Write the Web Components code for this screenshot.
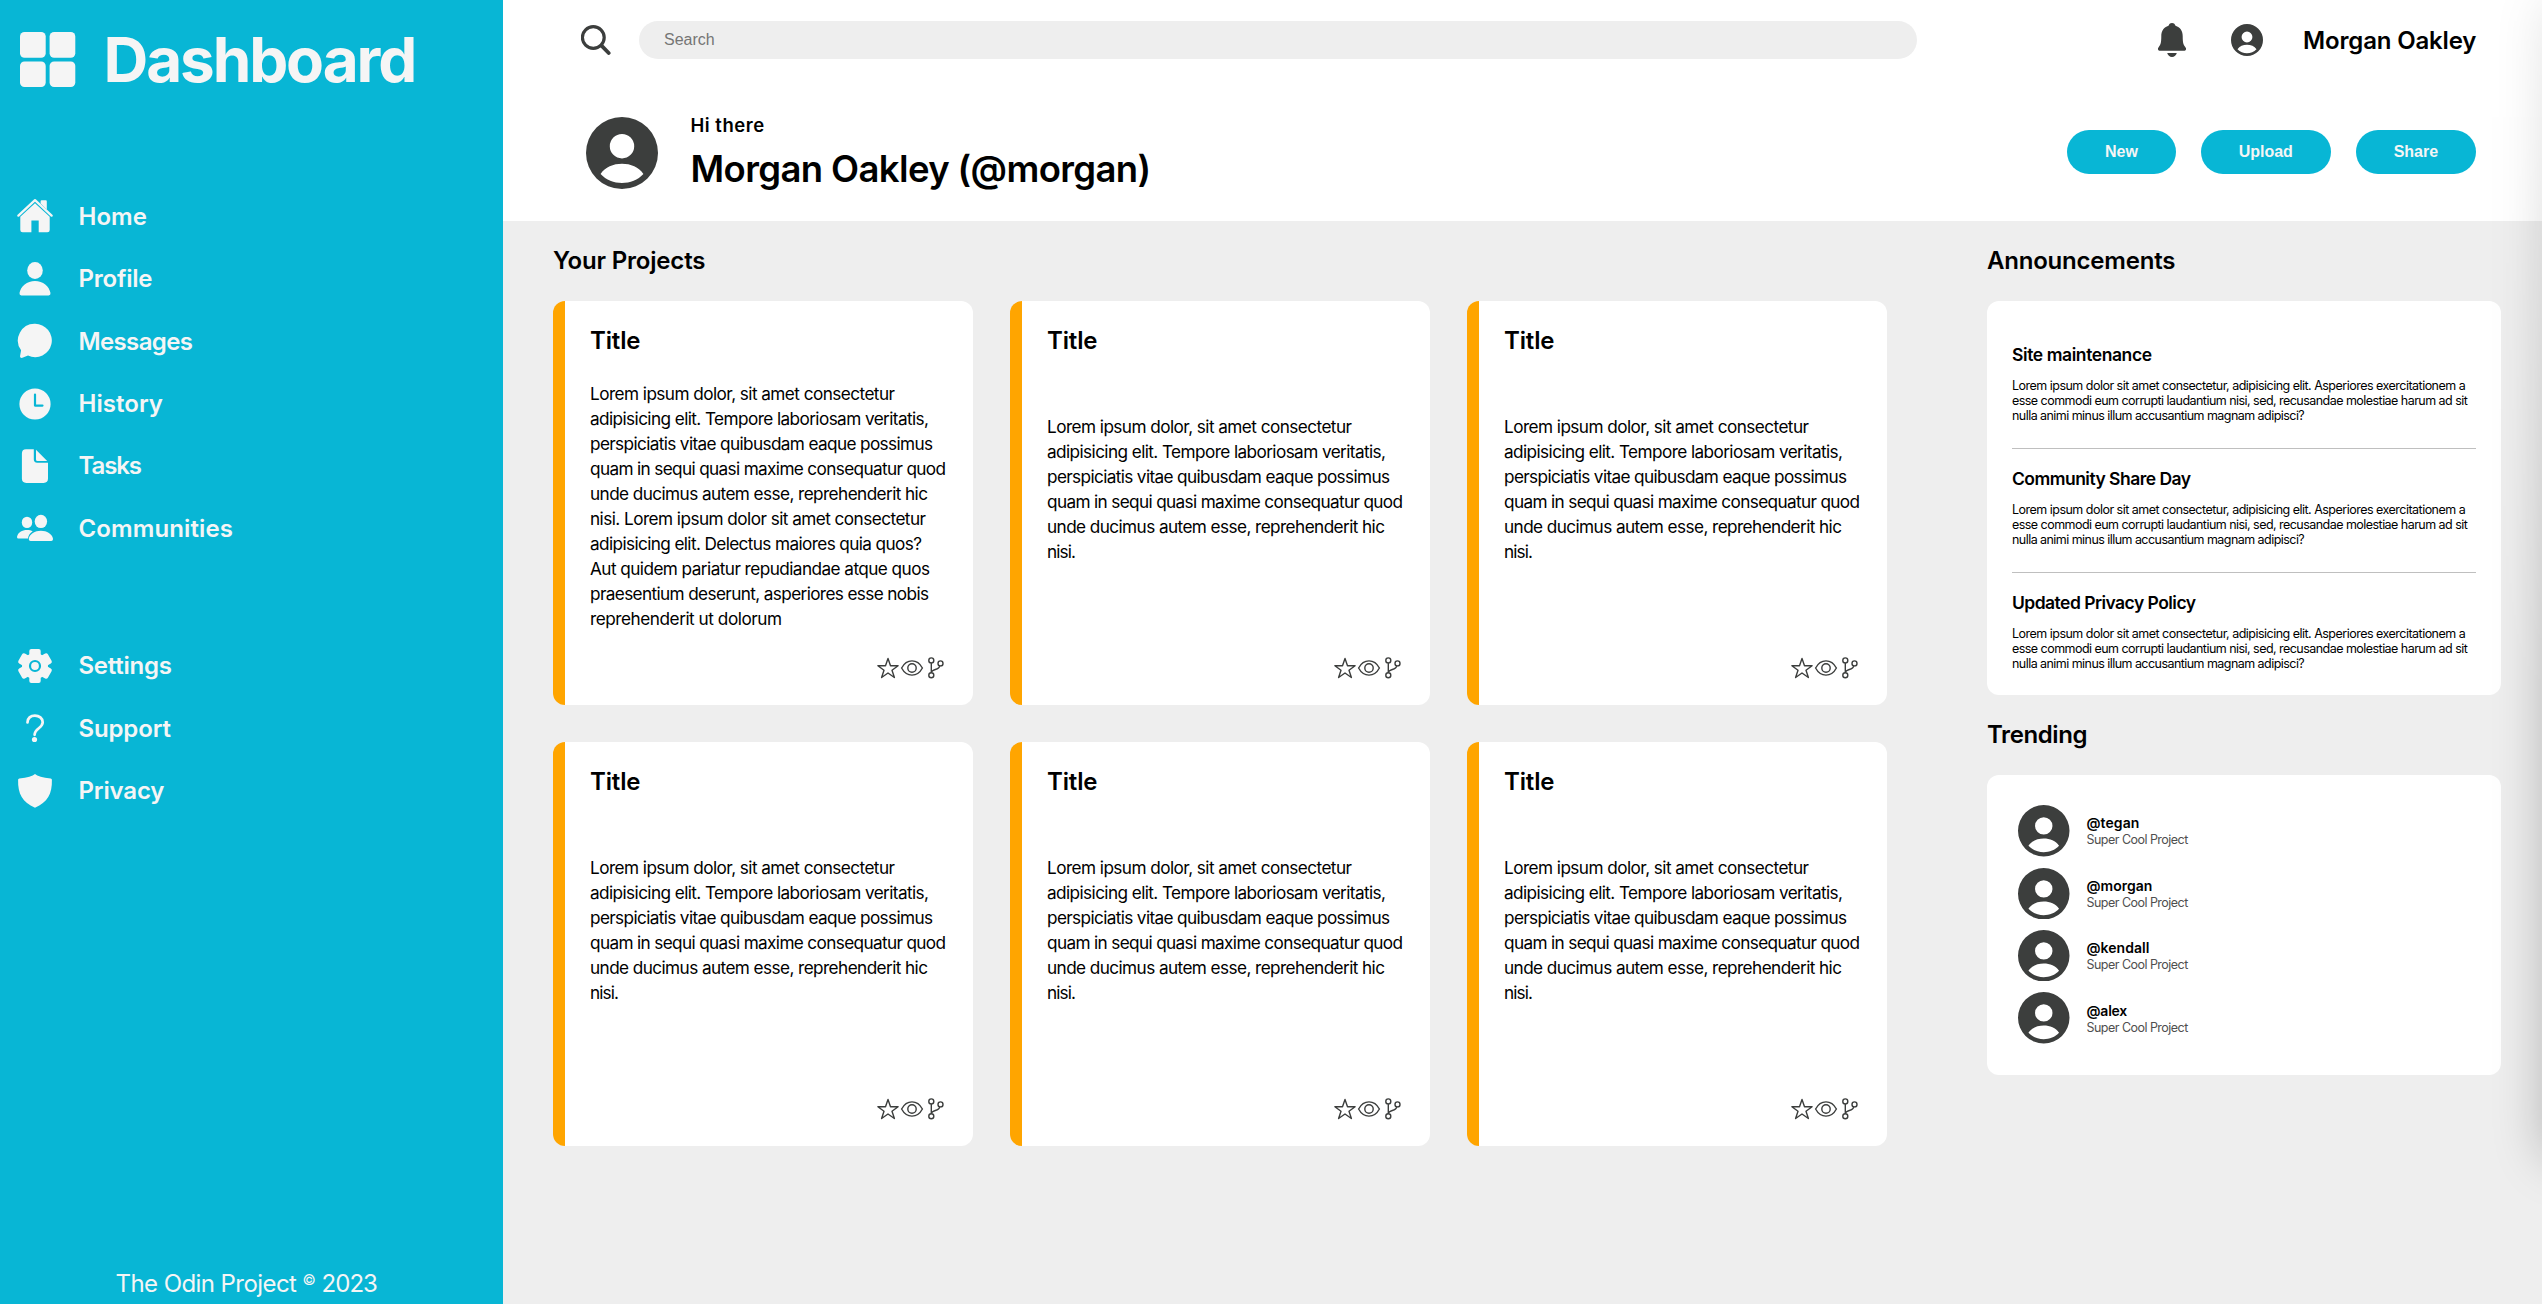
<!DOCTYPE html>
<html lang="en">
<head>
<meta charset="utf-8">
<title>Dashboard</title>
<style>
html,body{margin:0;padding:0;height:100%;overflow:hidden}
body{font-family:Inter,Lato,"Liberation Sans",sans-serif;color:#000;background:#eee}
</style>
</head>
<body>
<dash-app></dash-app>
<script>
const define = (name, css, html, ready) => customElements.define(name, class extends HTMLElement {
  connectedCallback() {
    if (this.shadowRoot) return;
    const root = this.attachShadow({mode: 'open'});
    root.innerHTML = `<style>:host{display:block;box-sizing:border-box}${css}</style>` + (typeof html === 'function' ? html(this) : html);
    if (ready) ready(this, root);
  }
});

const ICONS = {
  logo: ['0 0 56 56', '<g fill="currentColor"><rect x="0" y="0" width="25.7" height="25.7" rx="4.5"/><rect x="29.6" y="0" width="25.7" height="25.7" rx="4.5"/><rect x="0" y="29.4" width="25.7" height="25.7" rx="4.5"/><rect x="29.6" y="29.4" width="25.7" height="25.7" rx="4.5"/></g>'],
  home: ['0 0 36 36', '<path d="M1.4 17.6 18 2.2 34.6 17.6" fill="none" stroke="currentColor" stroke-width="2.3" stroke-linecap="round" stroke-linejoin="round"/><path fill="currentColor" d="M23.6 5.4V3.2q0-1 1-1h4.2q1 0 1 1v8.2zM18 5.2 32.7 18.8V32q0 2.3-2.3 2.3h-8.7V22.4h-7.3v11.9H5.6q-2.3 0-2.3-2.3V18.8z"/>'],
  profile: ['0 0 36 36', '<g fill="currentColor"><ellipse cx="18" cy="9.6" rx="7.8" ry="8.5"/><path d="M4.3 34.4q-2 0-1.8-2.3C3.7 25.3 10 20 18 20s14.300 5.300 15.500 12.100q.2 2.300-1.800 2.300z"/></g>'],
  messages: ['0 0 36 36', '<path fill="currentColor" d="M18 .8a16.700 16.700 0 1 1-7 31.800l-5.600 2.200c-1.500.5-2.600-.5-2.300-2l1-5.500A16.700 16.700 0 0 1 18 .8z"/>'],
  history: ['0 0 36 36', '<circle cx="18" cy="18" r="15.600" fill="currentColor"/><path d="M18 8.600v11h7.500" fill="none" stroke="#08b6d5" stroke-width="2.200" stroke-linecap="round" stroke-linejoin="round"/>'],
  tasks: ['0 0 36 36', '<path fill="currentColor" d="M9 1.300h7.800v10q0 3.400 3.400 3.400H31v15.800q0 4.400-4.400 4.400H9.300q-4.400 0-4.400-4.400V5.700q0-4.400 4.100-4.400zM19 1.800 30.200 12.900h-9.700q-1.500 0-1.500-1.500z"/>'],
  communities: ['0 0 36 36', '<g fill="currentColor"><ellipse cx="10" cy="12.400" rx="5.200" ry="5.700"/><ellipse cx="23.900" cy="11.400" rx="6.200" ry="6.700"/><path d="M1.300 28.600q-1.500-.2-1.200-2C1 22.500 5 20 10 20c2.200 0 4.200.4 5.700 1.200-2.500 1.700-4.400 4-4.700 7.400zM13.600 31q-2-.1-1.800-2.200c.7-4.800 6.200-8.100 12.100-8.100S35.400 24 36 28.800q.1 2.100-1.700 2.200z"/></g>'],
  settings: ['0 0 36 36', '<g fill="currentColor"><circle cx="18" cy="18" r="13"/><rect x="12.300" y="1" width="11.400" height="34" rx="2"/><rect x="12.300" y="1" width="11.400" height="34" rx="2" transform="rotate(60 18 18)"/><rect x="12.300" y="1" width="11.400" height="34" rx="2" transform="rotate(120 18 18)"/></g><circle cx="18" cy="18" r="5" fill="none" stroke="#08b6d5" stroke-width="2.200"/>'],
  support: ['0 0 36 36', '<path d="M10.500 12.500c0-4.500 3.200-6.900 7.400-6.900s7.800 2.600 7.800 6.700c0 5.900-8.100 6-8.100 12.500" fill="none" stroke="currentColor" stroke-width="2.700" stroke-linecap="round"/><circle cx="17.500" cy="29.500" r="2.600" fill="currentColor"/>'],
  privacy: ['0 0 36 36', '<path fill="currentColor" d="M18 .9q3.500 3 15.700 4.500 1.200.2 1.200 1.400C35.300 21 30.500 29.500 18 34.700 5.500 29.500.7 21 1.100 6.800q0-1.200 1.200-1.400Q14.500 3.900 18 .9z"/>'],
  search: ['0 0 30 30', '<circle cx="12.300" cy="12.500" r="10.900" fill="none" stroke="currentColor" stroke-width="3.200"/><path d="m20.500 20.700 7.200 7.300" stroke="currentColor" stroke-width="3.800" stroke-linecap="round"/>'],
  bell: ['0 0 28 34', '<path fill="currentColor" d="M14 0c2 0 3 1.300 3.500 2.800 4.700 1.500 7.200 5.200 7.200 10.200 0 6.800.7 8.800 2.500 10.900 1.800 2.100.6 3.900-1.300 3.900H2.100c-1.900 0-3.100-1.800-1.300-3.900C2.600 21.800 3.300 19.800 3.300 13c0-5 2.500-8.700 7.200-10.200C11 1.300 12 0 14 0zM9.200 30h9.600c-.5 2.400-2.500 3.900-4.800 3.900S9.700 32.400 9.200 30z"/>'],
  user: ['0 0 72 72', '<path fill="currentColor" fill-rule="evenodd" d="M36 0a36 36 0 1 1 0 72a36 36 0 1 1 0-72zM36 17a12.200 12.200 0 1 0 0 24.400a12.200 12.200 0 1 0 0-24.400zM14.600 57C20 63 28 66 36 66S52 63 57.400 57C53 50 44.500 46.800 36 46.800S19 50 14.600 57z"/>'],
  star: ['0 0 24 24', '<path d="m12 2.500 2.500 7.200h7.600l-6.100 4.500 2.400 7.300-6.400-4.500-6.400 4.500L8 14.200 1.900 9.700h7.600z" fill="none" stroke="currentColor" stroke-width="1.400" stroke-linejoin="round"/>'],
  eye: ['0 0 24 24', '<path d="M1.600 12C4 7.500 7.700 4.900 12 4.900S20 7.500 22.400 12C20 16.500 16.300 19.100 12 19.100S4 16.500 1.600 12z" fill="none" stroke="currentColor" stroke-width="1.400"/><circle cx="12" cy="12" r="4.200" fill="none" stroke="currentColor" stroke-width="1.400"/>'],
  fork: ['0 0 24 24', '<g fill="none" stroke="currentColor" stroke-width="1.400"><circle cx="7.300" cy="4.400" r="2.500"/><circle cx="7.300" cy="19.300" r="2.500"/><circle cx="16.500" cy="7.400" r="2.500"/><path d="M7.300 7v9.800M15.800 9.900c-.8 4.600-7.500 2.700-8.500 6.500"/></g>']
};

define('ui-icon', 'svg{display:block;width:100%;height:100%}:host{flex:none}', el => {
  const [box, body] = ICONS[el.getAttribute('name')];
  return `<svg viewBox="${box}" aria-hidden="true">${body}</svg>`;
}, el => {
  el.style.width = el.getAttribute('w') + 'px';
  el.style.height = (el.getAttribute('h') || el.getAttribute('w')) + 'px';
});

/* A single line of text, tracked so that it spans the width given by "w". */
define('text-line', ':host{white-space:nowrap}span{display:inline-block;vertical-align:top}', '<span><slot></slot></span>', (el, root) => {
  const span = root.querySelector('span');
  const size = parseFloat(getComputedStyle(el).fontSize);
  const want = parseFloat(el.getAttribute('w')) + size * 0.06;
  const have = span.getBoundingClientRect().width;
  el.style.letterSpacing = ((want - have) / (el.textContent.length - 1)).toFixed(3) + 'px';
  el.style.width = el.getAttribute('w') + 'px';
});

define('nav-item', ':host{display:flex;align-items:center;gap:25.500px;height:62.45px;font-weight:600;font-size:24px;line-height:30px}ui-icon{width:36px}text-line{padding-top:1px}',
  el => `<ui-icon name="${el.getAttribute('icon')}" w="36"></ui-icon><text-line w="${el.getAttribute('w')}">${el.getAttribute('label')}</text-line>`);

define('dash-sidebar', `:host{display:flex;flex-direction:column;background:#08b6d5;color:#f5f5f5;height:100%;padding-left:17px}
  .brand{display:flex;align-items:center;gap:27.500px;padding-left:3px;height:119px}
  .brand text-line{font-size:62px;font-weight:700;line-height:70px}
  nav{margin-top:66px} nav+nav{margin-top:75px}
  footer{margin-top:auto;display:flex;font-size:24px;line-height:30px;padding:0 0 5px 98.500px;gap:7px}
  .c{font-size:14.500px;line-height:21px;width:12px}`,
  `<div class="brand"><ui-icon name="logo" w="56"></ui-icon><text-line w="310">Dashboard</text-line></div>
  <nav><nav-item icon="home" label="Home" w="67"></nav-item><nav-item icon="profile" label="Profile" w="72.5"></nav-item><nav-item icon="messages" label="Messages" w="113"></nav-item><nav-item icon="history" label="History" w="83"></nav-item><nav-item icon="tasks" label="Tasks" w="62"></nav-item><nav-item icon="communities" label="Communities" w="153"></nav-item></nav>
  <nav><nav-item icon="settings" label="Settings" w="92"></nav-item><nav-item icon="support" label="Support" w="91"></nav-item><nav-item icon="privacy" label="Privacy" w="84.5"></nav-item></nav>
  <footer><text-line w="180">The Odin Project</text-line><span class="c">©</span><text-line w="55">2023</text-line></footer>`);

define('pill-button', ':host{height:44px;border-radius:22px;background:#08b6d5;color:#f5f5f5;font:700 16px/44px "Liberation Sans",Arial,sans-serif;padding:0 37.900px}', '<slot></slot>');

define('dash-header', `:host{height:221px;background:#fff;color:#000}
  .top{display:flex;align-items:center;height:80px;padding:0 67px 0 78px}
  ui-icon{color:#3c3e3d}
  .search{box-sizing:border-box;width:1278px;height:38px;border-radius:19px;background:#eee;margin-left:28px;padding-left:25px;font:16px/38px "Liberation Sans",Arial,sans-serif;color:#757575}
  .me{display:flex;align-items:center;margin-left:auto;font-size:24px;font-weight:600;line-height:30px}
  .me text-line{padding-top:1px}
  .me ui-icon+ui-icon{margin:0 40.500px 0 45px}
  .hello{display:flex;align-items:center;height:72px;padding:37px 66px 0 83px}
  .who{margin-left:32.500px;padding-bottom:3px;font-weight:600}
  .hi{font-size:18.500px;line-height:24px}.name{font-size:36.500px;line-height:44px;margin-top:10px}
  .btns{display:flex;gap:25px;margin-left:auto;margin-top:-2px}`,
  `<div class="top"><ui-icon name="search" w="30"></ui-icon><div class="search">Search</div>
   <div class="me"><ui-icon name="bell" w="28" h="34"></ui-icon><ui-icon name="user" w="32"></ui-icon><text-line w="172">Morgan Oakley</text-line></div></div>
   <div class="hello"><ui-icon name="user" w="72"></ui-icon><div class="who"><text-line class="hi" w="72.5">Hi there</text-line><text-line class="name" w="458.5">Morgan Oakley (@morgan)</text-line></div>
   <div class="btns"><pill-button>New</pill-button><pill-button>Upload</pill-button><pill-button>Share</pill-button></div></div>`);

const lines = list => list.map(([t, w]) => `<text-line w="${w}">${t}</text-line>`).join('');
const INTRO = [['Lorem ipsum dolor, sit amet consectetur', 304], ['adipisicing elit. Tempore laboriosam veritatis,', 338], ['perspiciatis vitae quibusdam eaque possimus', 342], ['quam in sequi quasi maxime consequatur quod', 355], ['unde ducimus autem esse, reprehenderit hic', 337]];
const SHORT = [...INTRO, ['nisi.', 28]];
const LONG = [...INTRO, ['nisi. Lorem ipsum dolor sit amet consectetur', 335], ['adipisicing elit. Delectus maiores quia quos?', 331], ['Aut quidem pariatur repudiandae atque quos', 339], ['praesentium deserunt, asperiores esse nobis', 338], ['reprehenderit ut dolorum', 191]];

define('project-card', `:host{display:flex;flex-direction:column;background:#fff;border-left:12px solid orange;border-radius:12px;padding:25.400px 25px 25px}
  .title{font-size:24px;font-weight:600;line-height:30px}
  .text{font-size:17.200px;line-height:25px;margin-top:57.300px}
  :host([long]) .text{margin-top:24.300px}
  .acts{display:flex;justify-content:flex-end;margin-top:auto;color:#3c3e3d}`,
  el => `<text-line class="title" w="49">Title</text-line><div class="text">${lines(el.hasAttribute('long') ? LONG : SHORT)}</div>
  <div class="acts"><ui-icon name="star" w="24"></ui-icon><ui-icon name="eye" w="24"></ui-icon><ui-icon name="fork" w="24"></ui-icon></div>`);

define('news-item', `:host{height:123.800px}
  :host(:not(:last-of-type)){border-bottom:1px solid #bfbfbf}
  .t{font-size:17.500px;font-weight:600;line-height:22px;padding-top:19px}
  .p{font-size:12.500px;line-height:15px;margin-top:12px}`,
  el => `<text-line class="t" w="${el.getAttribute('w')}">${el.getAttribute('label')}</text-line><div class="p">${lines([['Lorem ipsum dolor sit amet consectetur, adipisicing elit. Asperiores exercitationem a', 453], ['esse commodi eum corrupti laudantium nisi, sed, recusandae molestiae harum ad sit', 455], ['nulla animi minus illum accusantium magnam adipisci?', 292]])}</div>`);

define('trend-item', `:host{display:flex;align-items:center;gap:17px;height:62.400px}
  ui-icon{color:#3c3e3d}.h{font-size:14px;font-weight:600;line-height:17px}.s{font-size:12.500px;line-height:15px;color:#4f4f4f}
  .s{margin-top:1px}`,
  el => `<ui-icon name="user" w="51.500"></ui-icon><div><text-line class="h" w="${el.getAttribute('w')}">${el.getAttribute('label')}</text-line><text-line class="s" w="101">Super Cool Project</text-line></div>`);

define('section-title', ':host{font-size:24px;font-weight:600;line-height:30px;height:30px;padding-top:.7px}', el => `<text-line w="${el.getAttribute('w')}">${el.textContent}</text-line>`);

define('white-panel', ':host{background:#fff;border-radius:12px}', '<slot></slot>');

/* Soft shade cast by a panel resting just past the right edge. */
define('edge-shade', `:host{position:absolute;right:0;top:0;width:70px;height:1240px;overflow:hidden;pointer-events:none;-webkit-mask-image:linear-gradient(#0006,#000 700px);mask-image:linear-gradient(#0006,#000 700px)}
  div{margin-left:72px;width:100px;height:1160px;border-radius:0 0 0 20px;box-shadow:0 0 50px rgba(0,0,0,.25)}`, '<div></div>');

define('dash-app', `:host{display:grid;grid-template-columns:503px 1fr;height:1304px;position:relative;overflow:hidden}
  main{display:flex;gap:100px;padding:24.700px 41px 0 50px}
  .projects{width:1334px}.side{width:514px}
  .grid{display:grid;grid-template-columns:repeat(3,420px);grid-auto-rows:404px;gap:37px;margin-top:25.300px}
  .news{height:394px;padding:24px 25px 0;margin:25.300px 0 24.400px}
  .trend{height:300px;padding:25px 31px;margin-top:25.300px}`,
  `<dash-sidebar></dash-sidebar>
  <div><dash-header></dash-header>
  <main><div class="projects"><section-title w="151">Your Projects</section-title><div class="grid"><project-card long></project-card>${'<project-card></project-card>'.repeat(5)}</div></div>
  <div class="side"><section-title w="187">Announcements</section-title>
   <white-panel class="news"><news-item label="Site maintenance" w="139"></news-item><news-item label="Community Share Day" w="178"></news-item><news-item label="Updated Privacy Policy" w="183"></news-item></white-panel>
   <section-title w="99">Trending</section-title>
   <white-panel class="trend"><trend-item label="@tegan" w="52"></trend-item><trend-item label="@morgan" w="65"></trend-item><trend-item label="@kendall" w="62"></trend-item><trend-item label="@alex" w="40"></trend-item></white-panel></div></main></div>
  <edge-shade></edge-shade>`);
</script>
</body>
</html>
